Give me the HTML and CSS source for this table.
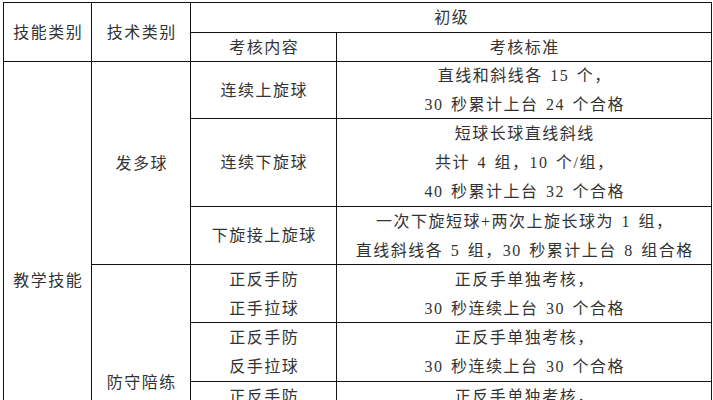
FILE: index.html
```html
<!DOCTYPE html>
<html lang="zh-CN">
<head>
<meta charset="utf-8">
<title>考核标准</title>
<link rel="stylesheet" href="styles.css">
</head>
<body>
<div class="sheet">
  <div class="cell c1 hspan">技能类别</div>
  <div class="cell c2 hspan">技术类别</div>
  <div class="cell c34">初级</div>
  <div class="cell c3 r2">考核内容</div>
  <div class="cell c4 r2">考核标准</div>

  <div class="cell c1 skill">教学技能</div>
  <div class="cell c2 serve">发多球</div>
  <div class="cell c3 r3">连续上旋球</div>
  <div class="cell c4 r3"><span>直线和斜线各 15 个，</span><span>30 秒累计上台 24 个合格</span></div>

  <div class="cell c3 r4">连续下旋球</div>
  <div class="cell c4 r4"><span>短球长球直线斜线</span><span>共计 4 组，10 个/组，</span><span>40 秒累计上台 32 个合格</span></div>

  <div class="cell c3 r5">下旋接上旋球</div>
  <div class="cell c4 r5"><span>一次下旋短球+两次上旋长球为 1 组，</span><span>直线斜线各 5 组，30 秒累计上台 8 组合格</span></div>

  <div class="cell c2 defend">防守陪练</div>
  <div class="cell c3 r6"><span>正反手防</span><span>正手拉球</span></div>
  <div class="cell c4 r6"><span>正反手单独考核，</span><span>30 秒连续上台 30 个合格</span></div>

  <div class="cell c3 r7"><span>正反手防</span><span>反手拉球</span></div>
  <div class="cell c4 r7"><span>正反手单独考核，</span><span>30 秒连续上台 30 个合格</span></div>

  <div class="cell c3 r8"><span>正反手防</span><span>侧身拉球</span></div>
  <div class="cell c4 r8"><span>正反手单独考核，</span><span>30 秒连续上台 30 个合格</span></div>

  <div class="cell c3 r9"><span>正反手防</span><span>推挡球</span></div>
  <div class="cell c4 r9"><span>正反手单独考核，</span><span>30 秒连续上台 30 个合格</span></div>
</div>
</body>
</html>
```
FILE: styles.css
```css
html, body {
  margin: 0;
  padding: 0;
  background: #fff;
}
body {
  font-family: "Liberation Serif", "Noto Sans CJK SC", serif;
  font-size: 16px;
  color: #333;
}
.sheet {
  display: grid;
  grid-template-columns: 87px 98px 145px 374px;
  grid-template-rows: 29px 28px 56px 87px 57px 57px 58px 58px 58px;
  gap: 1px;
  padding: 1px;
  background: #111;
  width: max-content;
  margin: 2px 0 0 3px;
}
.cell {
  background: #fff;
  display: flex;
  flex-direction: column;
  align-items: center;
  justify-content: center;
  text-align: center;
  line-height: 29px;
  letter-spacing: 1.5px;
  word-spacing: 2px;
  white-space: nowrap;
  padding-left: 1.5px;
}
.cell span { display: block; }
.c1 { grid-column: 1; }
.c2 { grid-column: 2; }
.c3 { grid-column: 3; }
.c4 { grid-column: 4; }
.c34 { grid-column: 3 / 5; grid-row: 1; }
.hspan { grid-row: 1 / 3; }
.r2 { grid-row: 2; }
.r3 { grid-row: 3; }
.r4 { grid-row: 4; }
.r5 { grid-row: 5; }
.r6 { grid-row: 6; }
.r7 { grid-row: 7; }
.r8 { grid-row: 8; }
.r9 { grid-row: 9; }
.skill { grid-row: 3 / 10; }
.serve { grid-row: 3 / 6; }
.defend { grid-row: 6 / 10; }
```
